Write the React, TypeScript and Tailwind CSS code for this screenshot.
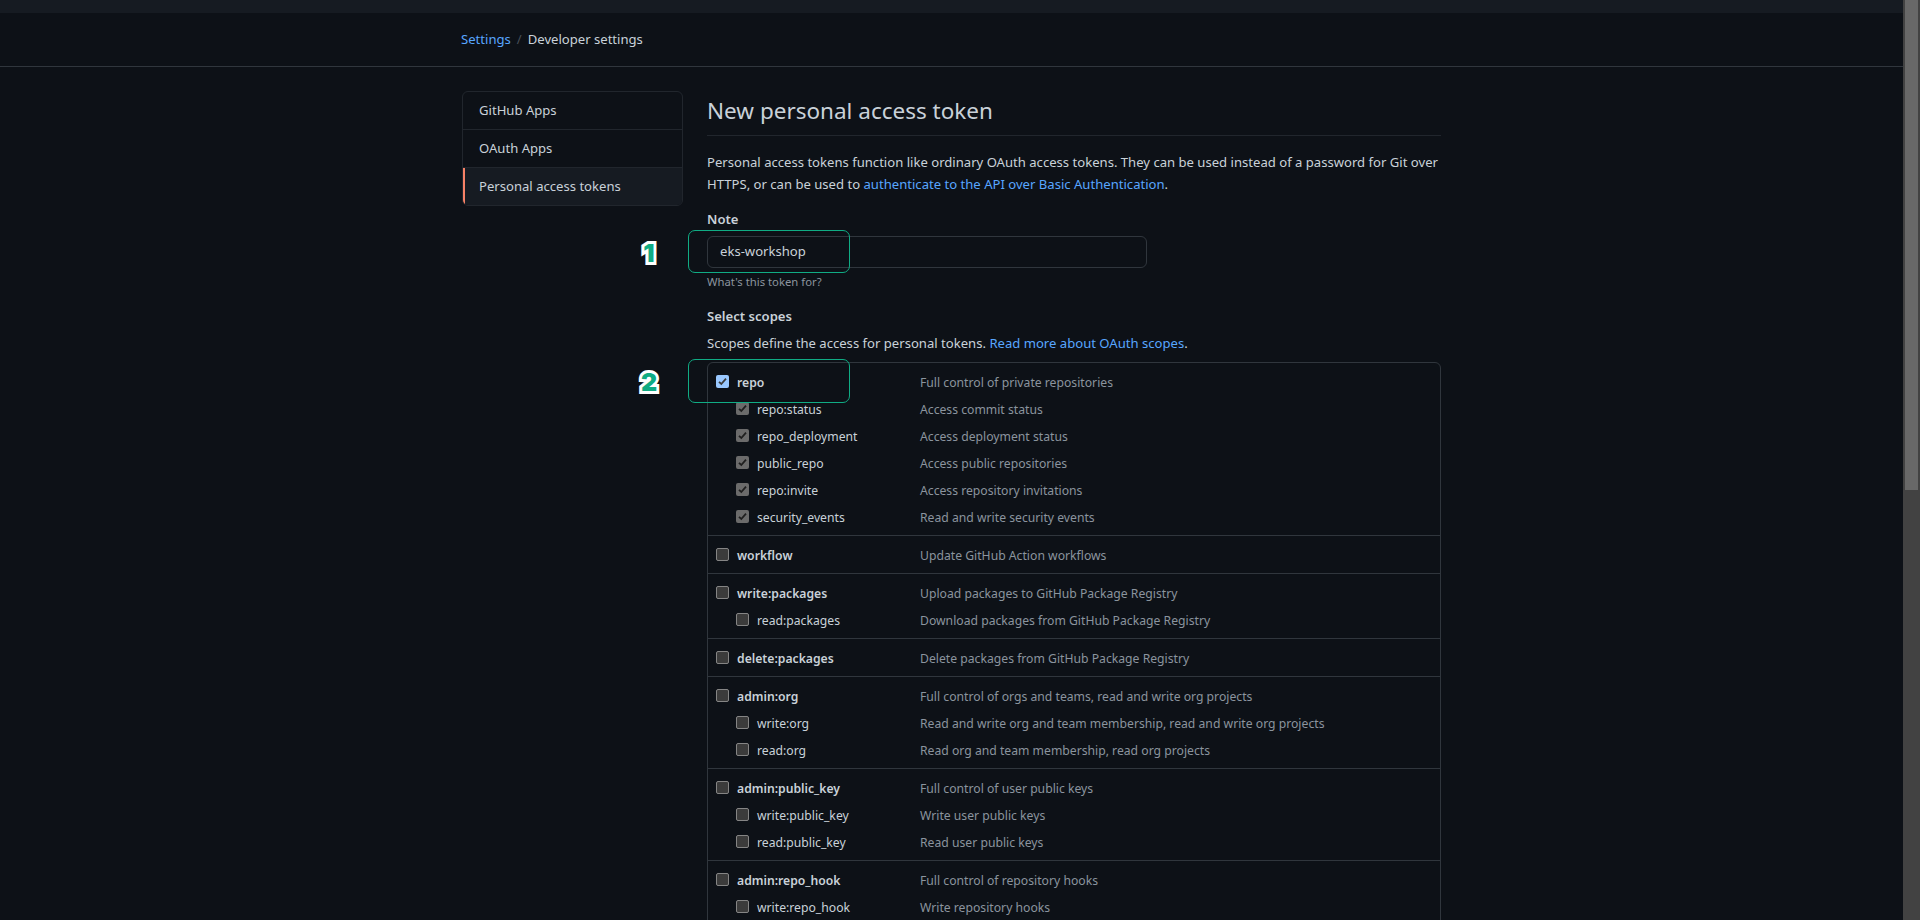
const subtle = "text-[#8b949e]";

type Scope = { name: string; desc: string; checked?: boolean };
type Group = Scope & { children?: Scope[] };

const groups: Group[] = [
  {
    name: "repo",
    desc: "Full control of private repositories",
    checked: true,
    children: [
      { name: "repo:status", desc: "Access commit status", checked: true },
      { name: "repo_deployment", desc: "Access deployment status", checked: true },
      { name: "public_repo", desc: "Access public repositories", checked: true },
      { name: "repo:invite", desc: "Access repository invitations", checked: true },
      { name: "security_events", desc: "Read and write security events", checked: true },
    ],
  },
  { name: "workflow", desc: "Update GitHub Action workflows" },
  {
    name: "write:packages",
    desc: "Upload packages to GitHub Package Registry",
    children: [{ name: "read:packages", desc: "Download packages from GitHub Package Registry" }],
  },
  { name: "delete:packages", desc: "Delete packages from GitHub Package Registry" },
  {
    name: "admin:org",
    desc: "Full control of orgs and teams, read and write org projects",
    children: [
      { name: "write:org", desc: "Read and write org and team membership, read and write org projects" },
      { name: "read:org", desc: "Read org and team membership, read org projects" },
    ],
  },
  {
    name: "admin:public_key",
    desc: "Full control of user public keys",
    children: [
      { name: "write:public_key", desc: "Write user public keys" },
      { name: "read:public_key", desc: "Read user public keys" },
    ],
  },
  {
    name: "admin:repo_hook",
    desc: "Full control of repository hooks",
    children: [
      { name: "write:repo_hook", desc: "Write repository hooks" },
      { name: "read:repo_hook", desc: "Read repository hooks" },
    ],
  },
];

function Box({ checked, parent }: { checked?: boolean; parent?: boolean }) {
  if (!checked) {
    return <span className="block w-[13px] h-[13px] rounded-[2px] bg-[#3b3b3b] border border-[#858585]" />;
  }
  return (
    <span
      className={`flex items-center justify-center w-[13px] h-[13px] rounded-[2px] ${
        parent ? "bg-[#99c8ff]" : "bg-[#6b6b6b]"
      }`}
    >
      <svg width="11" height="11" viewBox="0 0 11 11" fill="none">
        <path d="M2 5.8 L4.3 8 L9 2.6" stroke={parent ? "#3b3b3b" : "#1f1f1f"} strokeWidth="1.8" />
      </svg>
    </span>
  );
}

function ScopeRow({ scope, child }: { scope: Scope; child?: boolean }) {
  return (
    <div className="flex h-[27px] items-center">
      <div className={`flex w-[212px] shrink-0 items-center ${child ? "pl-[28px]" : "pl-[8px]"}`}>
        <span className="-mt-[4px] mr-[8px]">
          <Box checked={scope.checked} parent={scope.checked && !child} />
        </span>
        <span className={child ? "text-[12.2px] text-[#c9d1d9]" : "text-[12.2px] font-semibold text-[#c9d1d9]"}>
          {scope.name}
        </span>
      </div>
      <span className={subtle + " text-[12.2px]"}>{scope.desc}</span>
    </div>
  );
}

function Callout({ number, className }: { number: string; className: string }) {
  return (
    <>
      <div className={`absolute left-[-19px] w-[162px] rounded-[7px] border border-[#10ac84] ${className}`} />
      <div
        className={`absolute left-[-69px] w-[22px] text-center text-[25px] font-black leading-none text-[#10ac84] [font-family:Inter,sans-serif] [-webkit-text-stroke:6px_white] [paint-order:stroke_fill] ${
          number === "1" ? "top-[34px]" : "top-[163px]"
        }`}
      >
        {number}
      </div>
    </>
  );
}

export default function App() {
  return (
    <div className="flex h-[920px] overflow-hidden bg-[#0d1117] text-[13.1px] text-[#c9d1d9] [font-family:'Noto_Sans',sans-serif]">
      <div className="flex-1 min-w-0">
        <div className="h-[13px] bg-[#161b22]" />
        <div className="h-[54px] border-b border-[#30363d] pl-[461px] pt-[17px] flex gap-[6px]">
          <a className="text-[#58a6ff]">Settings</a>
          <span className="text-[#484f58]">/</span>
          <span className="text-[#c9d1d9]">Developer settings</span>
        </div>
        <div className="flex pl-[462px] pt-[24px]">
          <nav className="w-[221px] h-[115px] shrink-0 rounded-[6px] border border-[#21262d] overflow-hidden">
            <div className="h-[38px] flex items-center pl-[16px] pt-[1px] border-b border-[#21262d]">GitHub Apps</div>
            <div className="h-[38px] flex items-center pl-[16px] pt-[1px] border-b border-[#21262d]">OAuth Apps</div>
            <div className="h-[37px] flex items-center pl-[14px] pt-[1px] bg-[#161b22] border-l-2 border-[#f78166]">
              Personal access tokens
            </div>
          </nav>
          <main className="ml-[24px] w-[734px]">
            <h1 className="h-[45px] border-b border-[#21262d] text-[22.5px] font-normal leading-[40px]">
              New personal access token
            </h1>
            <p className="mt-[15px] leading-[22px]">
              Personal access tokens function like ordinary OAuth access tokens. They can be used instead of a password for Git over
              HTTPS, or can be used to <a className="text-[#58a6ff]">authenticate to the API over Basic Authentication</a>.
            </p>
            <div className="relative mt-[13px]">
              <div className="font-semibold leading-[24px] -mt-[1px]">Note</div>
              <Callout number="1" className="top-[23px] h-[43px]" />
              <div className="mt-[5px] flex h-[32px] w-[440px] items-center rounded-[6px] border border-[#30363d] pl-[12px]">
                eks-workshop
              </div>
              <div className={subtle + " mt-[4px] text-[11.3px] leading-[20px]"}>What's this token for?</div>
              <div className="mt-[14px] font-semibold leading-[20px]">Select scopes</div>
              <p className="mt-[7px] leading-[20px]">
                Scopes define the access for personal tokens.{" "}
                <a className="text-[#58a6ff]">Read more about OAuth scopes</a>.
              </p>
              <Callout number="2" className="top-[152px] h-[44px]" />
              <div className="mt-[9px] rounded-[6px] border border-[#30363d]">
                {groups.map((g, i) => (
                  <div key={g.name} className={i ? "border-t border-[#30363d] pt-[7px] pb-[3px]" : "pt-[7px] pb-[3px]"}>
                    <ScopeRow scope={g} />
                    {g.children?.map((c) => <ScopeRow key={c.name} scope={c} child />)}
                  </div>
                ))}
              </div>
            </div>
          </main>
        </div>
      </div>
      <div className="w-[17px] shrink-0 bg-[#424242] pl-[2px] pr-[2px]">
        <div className="h-[490px] bg-[#686868]" />
      </div>
    </div>
  );
}
